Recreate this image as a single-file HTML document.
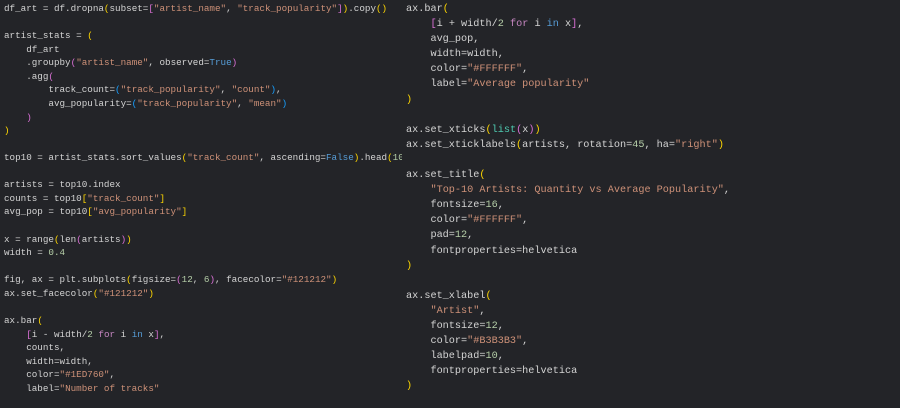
<!DOCTYPE html>
<html><head><meta charset="utf-8"><style>
html,body{margin:0;padding:0;background:#232428;width:900px;height:408px;overflow:hidden}
pre{margin:0;position:absolute;font-family:"Liberation Mono",monospace;color:#d4d4d4;white-space:pre}
#l{left:4px;top:2px;font-size:9.25px;line-height:13.57px;width:398px;overflow:hidden}
#r{left:406px;top:2px;font-size:10.2px;line-height:15.1px}
.s{color:#ce9178}.n{color:#b5cea8}.k{color:#569cd6}.p{color:#c586c0}.f{color:#4ec9b0}
.y{color:#ffd700}.m{color:#da70d6}.b{color:#179fff}
</style></head><body>
<pre id="l">df_art = df.dropna<span class="y">(</span>subset=<span class="m">[</span><span class="s">"artist_name"</span>, <span class="s">"track_popularity"</span><span class="m">]</span><span class="y">)</span>.copy<span class="y">()</span>

artist_stats = <span class="y">(</span>
    df_art
    .groupby<span class="m">(</span><span class="s">"artist_name"</span>, observed=<span class="k">True</span><span class="m">)</span>
    .agg<span class="m">(</span>
        track_count=<span class="b">(</span><span class="s">"track_popularity"</span>, <span class="s">"count"</span><span class="b">)</span>,
        avg_popularity=<span class="b">(</span><span class="s">"track_popularity"</span>, <span class="s">"mean"</span><span class="b">)</span>
    <span class="m">)</span>
<span class="y">)</span>

top10 = artist_stats.sort_values<span class="y">(</span><span class="s">"track_count"</span>, ascending=<span class="k">False</span><span class="y">)</span>.head<span class="y">(</span><span class="n">10</span><span class="y">)</span>

artists = top10.index
counts = top10<span class="y">[</span><span class="s">"track_count"</span><span class="y">]</span>
avg_pop = top10<span class="y">[</span><span class="s">"avg_popularity"</span><span class="y">]</span>

x = range<span class="y">(</span>len<span class="m">(</span>artists<span class="m">)</span><span class="y">)</span>
width = <span class="n">0.4</span>

fig, ax = plt.subplots<span class="y">(</span>figsize=<span class="m">(</span><span class="n">12</span>, <span class="n">6</span><span class="m">)</span>, facecolor=<span class="s">"#121212"</span><span class="y">)</span>
ax.set_facecolor<span class="y">(</span><span class="s">"#121212"</span><span class="y">)</span>

ax.bar<span class="y">(</span>
    <span class="m">[</span>i - width/<span class="n">2</span> <span class="p">for</span> i <span class="k">in</span> x<span class="m">]</span>,
    counts,
    width=width,
    color=<span class="s">"#1ED760"</span>,
    label=<span class="s">"Number of tracks"</span>
</pre>
<pre id="r">ax.bar<span class="y">(</span>
    <span class="m">[</span>i + width/<span class="n">2</span> <span class="p">for</span> i <span class="k">in</span> x<span class="m">]</span>,
    avg_pop,
    width=width,
    color=<span class="s">"#FFFFFF"</span>,
    label=<span class="s">"Average popularity"</span>
<span class="y">)</span>

ax.set_xticks<span class="y">(</span><span class="f">list</span><span class="m">(</span>x<span class="m">)</span><span class="y">)</span>
ax.set_xticklabels<span class="y">(</span>artists, rotation=<span class="n">45</span>, ha=<span class="s">"right"</span><span class="y">)</span>

ax.set_title<span class="y">(</span>
    <span class="s">"Top-10 Artists: Quantity vs Average Popularity"</span>,
    fontsize=<span class="n">16</span>,
    color=<span class="s">"#FFFFFF"</span>,
    pad=<span class="n">12</span>,
    fontproperties=helvetica
<span class="y">)</span>

ax.set_xlabel<span class="y">(</span>
    <span class="s">"Artist"</span>,
    fontsize=<span class="n">12</span>,
    color=<span class="s">"#B3B3B3"</span>,
    labelpad=<span class="n">10</span>,
    fontproperties=helvetica
<span class="y">)</span>
</pre>
</body></html>
